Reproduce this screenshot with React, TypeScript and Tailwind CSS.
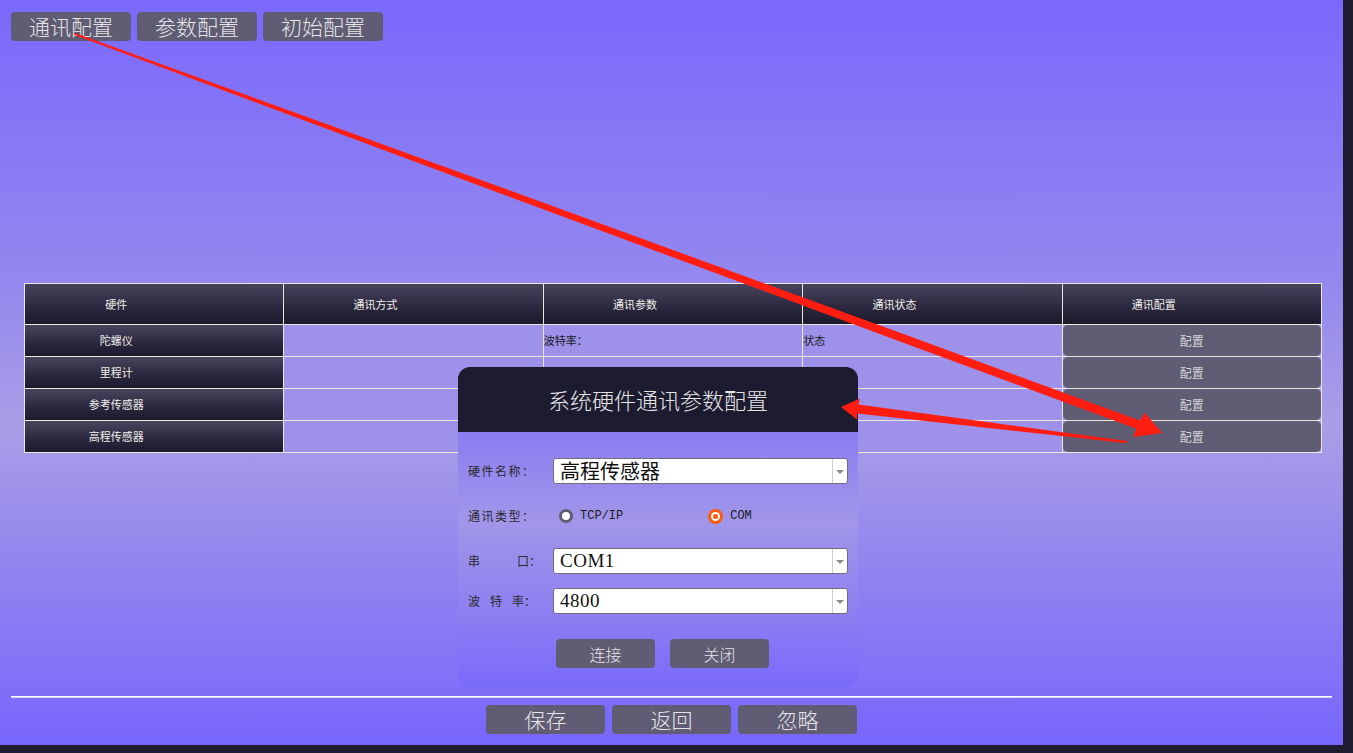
import React from 'react';

const rows = ['陀螺仪', '里程计', '参考传感器', '高程传感器'];
const heads = ['硬件', '通讯方式', '通讯参数', '通讯状态', '通讯配置'];

const DarkCell = ({ label, tall }: { label: string; tall?: boolean }) => (
  <div className={`flex items-center justify-center pr-[76px] text-[11px] text-[#f0eee8] bg-[linear-gradient(180deg,#49445e_0%,#2c2940_55%,#1c1a2d_100%)] ${tall ? 'h-[40px]' : 'h-[31px]'}`}>
    {label}
  </div>
);

const Select = ({ value, serif }: { value: string; serif?: boolean }) => (
  <div className="flex h-[26px] w-[295px] items-stretch rounded-[3px] border border-[#6f6c80] bg-white">
    <div className={`flex flex-1 items-center pl-[6px] text-[#111] ${serif ? "font-['Liberation_Serif',serif] text-[19px] tracking-[0.5px]" : 'text-[20px]'}`}>{value}</div>
    <div className="flex w-[15px] items-center justify-center border-l border-[#cfcfcf]">
      <span className="mt-[2px] border-x-[4px] border-t-[4px] border-x-transparent border-t-[#8a8a8a]" />
    </div>
  </div>
);

const GrayBtn = ({ label, className }: { label: string; className: string }) => (
  <button className={`flex items-center justify-center rounded-[4px] bg-[#5f5c74] font-light text-[#e6e6e6] ${className}`}>{label}</button>
);

export default function App() {
  return (
    <div className="relative flex h-[753px] w-[1353px] flex-col overflow-hidden bg-[#1e1c2e] font-['Noto_Sans_CJK_SC','Noto_Sans',sans-serif]">
      <div className="flex h-[745px]">
        <main className="flex w-[1343px] flex-col bg-[linear-gradient(180deg,#7a68fc_0%,#9488ee_38%,#a99ee6_57%,#8f82f0_78%,#7766fc_100%)]">
          <div className="ml-[11px] mt-[12px] flex gap-[6px]">
            {['通讯配置', '参数配置', '初始配置'].map((t) => (
              <GrayBtn key={t} label={t} className="h-[29px] w-[120px] text-[21px]" />
            ))}
          </div>

          <div className="ml-[24px] mt-[242px] grid w-[1298px] grid-cols-5 gap-px border border-[#ece7da] bg-[#ece7da]">
            {heads.map((h) => (
              <DarkCell key={h} label={h} tall />
            ))}
            {rows.map((r, i) => (
              <React.Fragment key={r}>
                <DarkCell label={r} />
                <div className="h-[31px] bg-[#9d91ea]" />
                <div className="flex h-[31px] items-center bg-[#9d91ea] text-[11px] text-[#1a1a1a]">{i === 0 ? '波特率：' : ''}</div>
                <div className="flex h-[31px] items-center bg-[#9d91ea] text-[11px] text-[#1a1a1a]">{i === 0 ? '状态' : ''}</div>
                <div className="h-[31px] bg-[#9d91ea]">
                  <button className="flex h-full w-full items-center justify-center rounded-[5px] bg-[#5f5c74] text-[12px] text-[#d4d4d4]">配置</button>
                </div>
              </React.Fragment>
            ))}
          </div>

          <div className="flex-1" />

          <div className="ml-[11px] w-[1321px] border-t border-b border-t-white border-b-[#d8d2f6]" />
          <div className="mb-[11px] mt-[7px] flex justify-center gap-[7px]">
            {['保存', '返回', '忽略'].map((t) => (
              <GrayBtn key={t} label={t} className="h-[29px] w-[119px] text-[21px]" />
            ))}
          </div>
        </main>
        <div className="w-[10px] bg-[#1e1c2e]" />
      </div>

      {/* modal */}
      <div className="absolute left-[458px] top-[367px] flex h-[320px] w-[400px] flex-col overflow-hidden rounded-[12px]">
        <div className="flex h-[65px] items-center justify-center bg-[#1d1b30] text-[22px] font-light text-[#e6e6e6]">系统硬件通讯参数配置</div>
        <div className="flex-1 bg-[linear-gradient(180deg,#8a7df2_0%,#a196e9_35%,#8d80f1_70%,#7a6afb_100%)] px-[10px] pt-[26px]">
          <div className="flex h-[26px] items-center">
            <span className="w-[85px] text-[12px] tracking-[1.5px] text-[#2a2a2a]">硬件名称：</span>
            <Select value="高程传感器" />
          </div>
          <div className="mt-[19px] flex h-[26px] items-center">
            <span className="w-[85px] text-[12px] tracking-[1.5px] text-[#2a2a2a]">通讯类型：</span>
            <span className="ml-[6px] h-[14px] w-[14px] rounded-full border-[3px] border-[#5f5c74] bg-white" />
            <span className="ml-[7px] font-['Liberation_Mono',monospace] text-[12px] text-[#1a1a1a]">TCP/IP</span>
            <span className="ml-[85px] flex h-[15px] w-[15px] items-center justify-center rounded-full bg-[#ff5a0a]">
              <span className="flex h-[9px] w-[9px] items-center justify-center rounded-full bg-white">
                <span className="h-[5px] w-[5px] rounded-full bg-[#ff5a0a]" />
              </span>
            </span>
            <span className="ml-[7px] font-['Liberation_Mono',monospace] text-[12px] text-[#1a1a1a]">COM</span>
          </div>
          <div className="mt-[19px] flex h-[26px] items-center">
            <span className="flex w-[85px] text-[12px] text-[#2a2a2a]">
              <span>串</span>
              <span className="ml-[37px]">口</span>
              <span>：</span>
            </span>
            <Select value="COM1" serif />
          </div>
          <div className="mt-[14px] flex h-[26px] items-center">
            <span className="flex w-[85px] text-[12px] text-[#2a2a2a]">
              <span>波</span>
              <span className="ml-[10px]">特</span>
              <span className="ml-[10px]">率</span>
              <span>：</span>
            </span>
            <Select value="4800" serif />
          </div>
          <div className="ml-[88px] mt-[25px] flex gap-[15px]">
            <GrayBtn label="连接" className="h-[29px] w-[99px] text-[16px]" />
            <GrayBtn label="关闭" className="h-[29px] w-[99px] text-[16px]" />
          </div>
        </div>
      </div>

      {/* annotation arrows */}
      <svg className="pointer-events-none absolute left-0 top-0" width="1353" height="753" viewBox="0 0 1353 753">
        <polygon
          fill="#ff1d12"
          points="75,33 501,187.3 901.4,333.3 1139.6,420.4 1145,413 1162,433 1133,437 1136.4,428.8 898.6,340.9 499,192.9 74.5,35"
        />
        <polygon fill="#ff1d12" points="1127.2,441 858.4,404.6 860,398.5 841,407 857,419.5 857.4,413.6 1126.8,443.2" />
      </svg>
    </div>
  );
}
